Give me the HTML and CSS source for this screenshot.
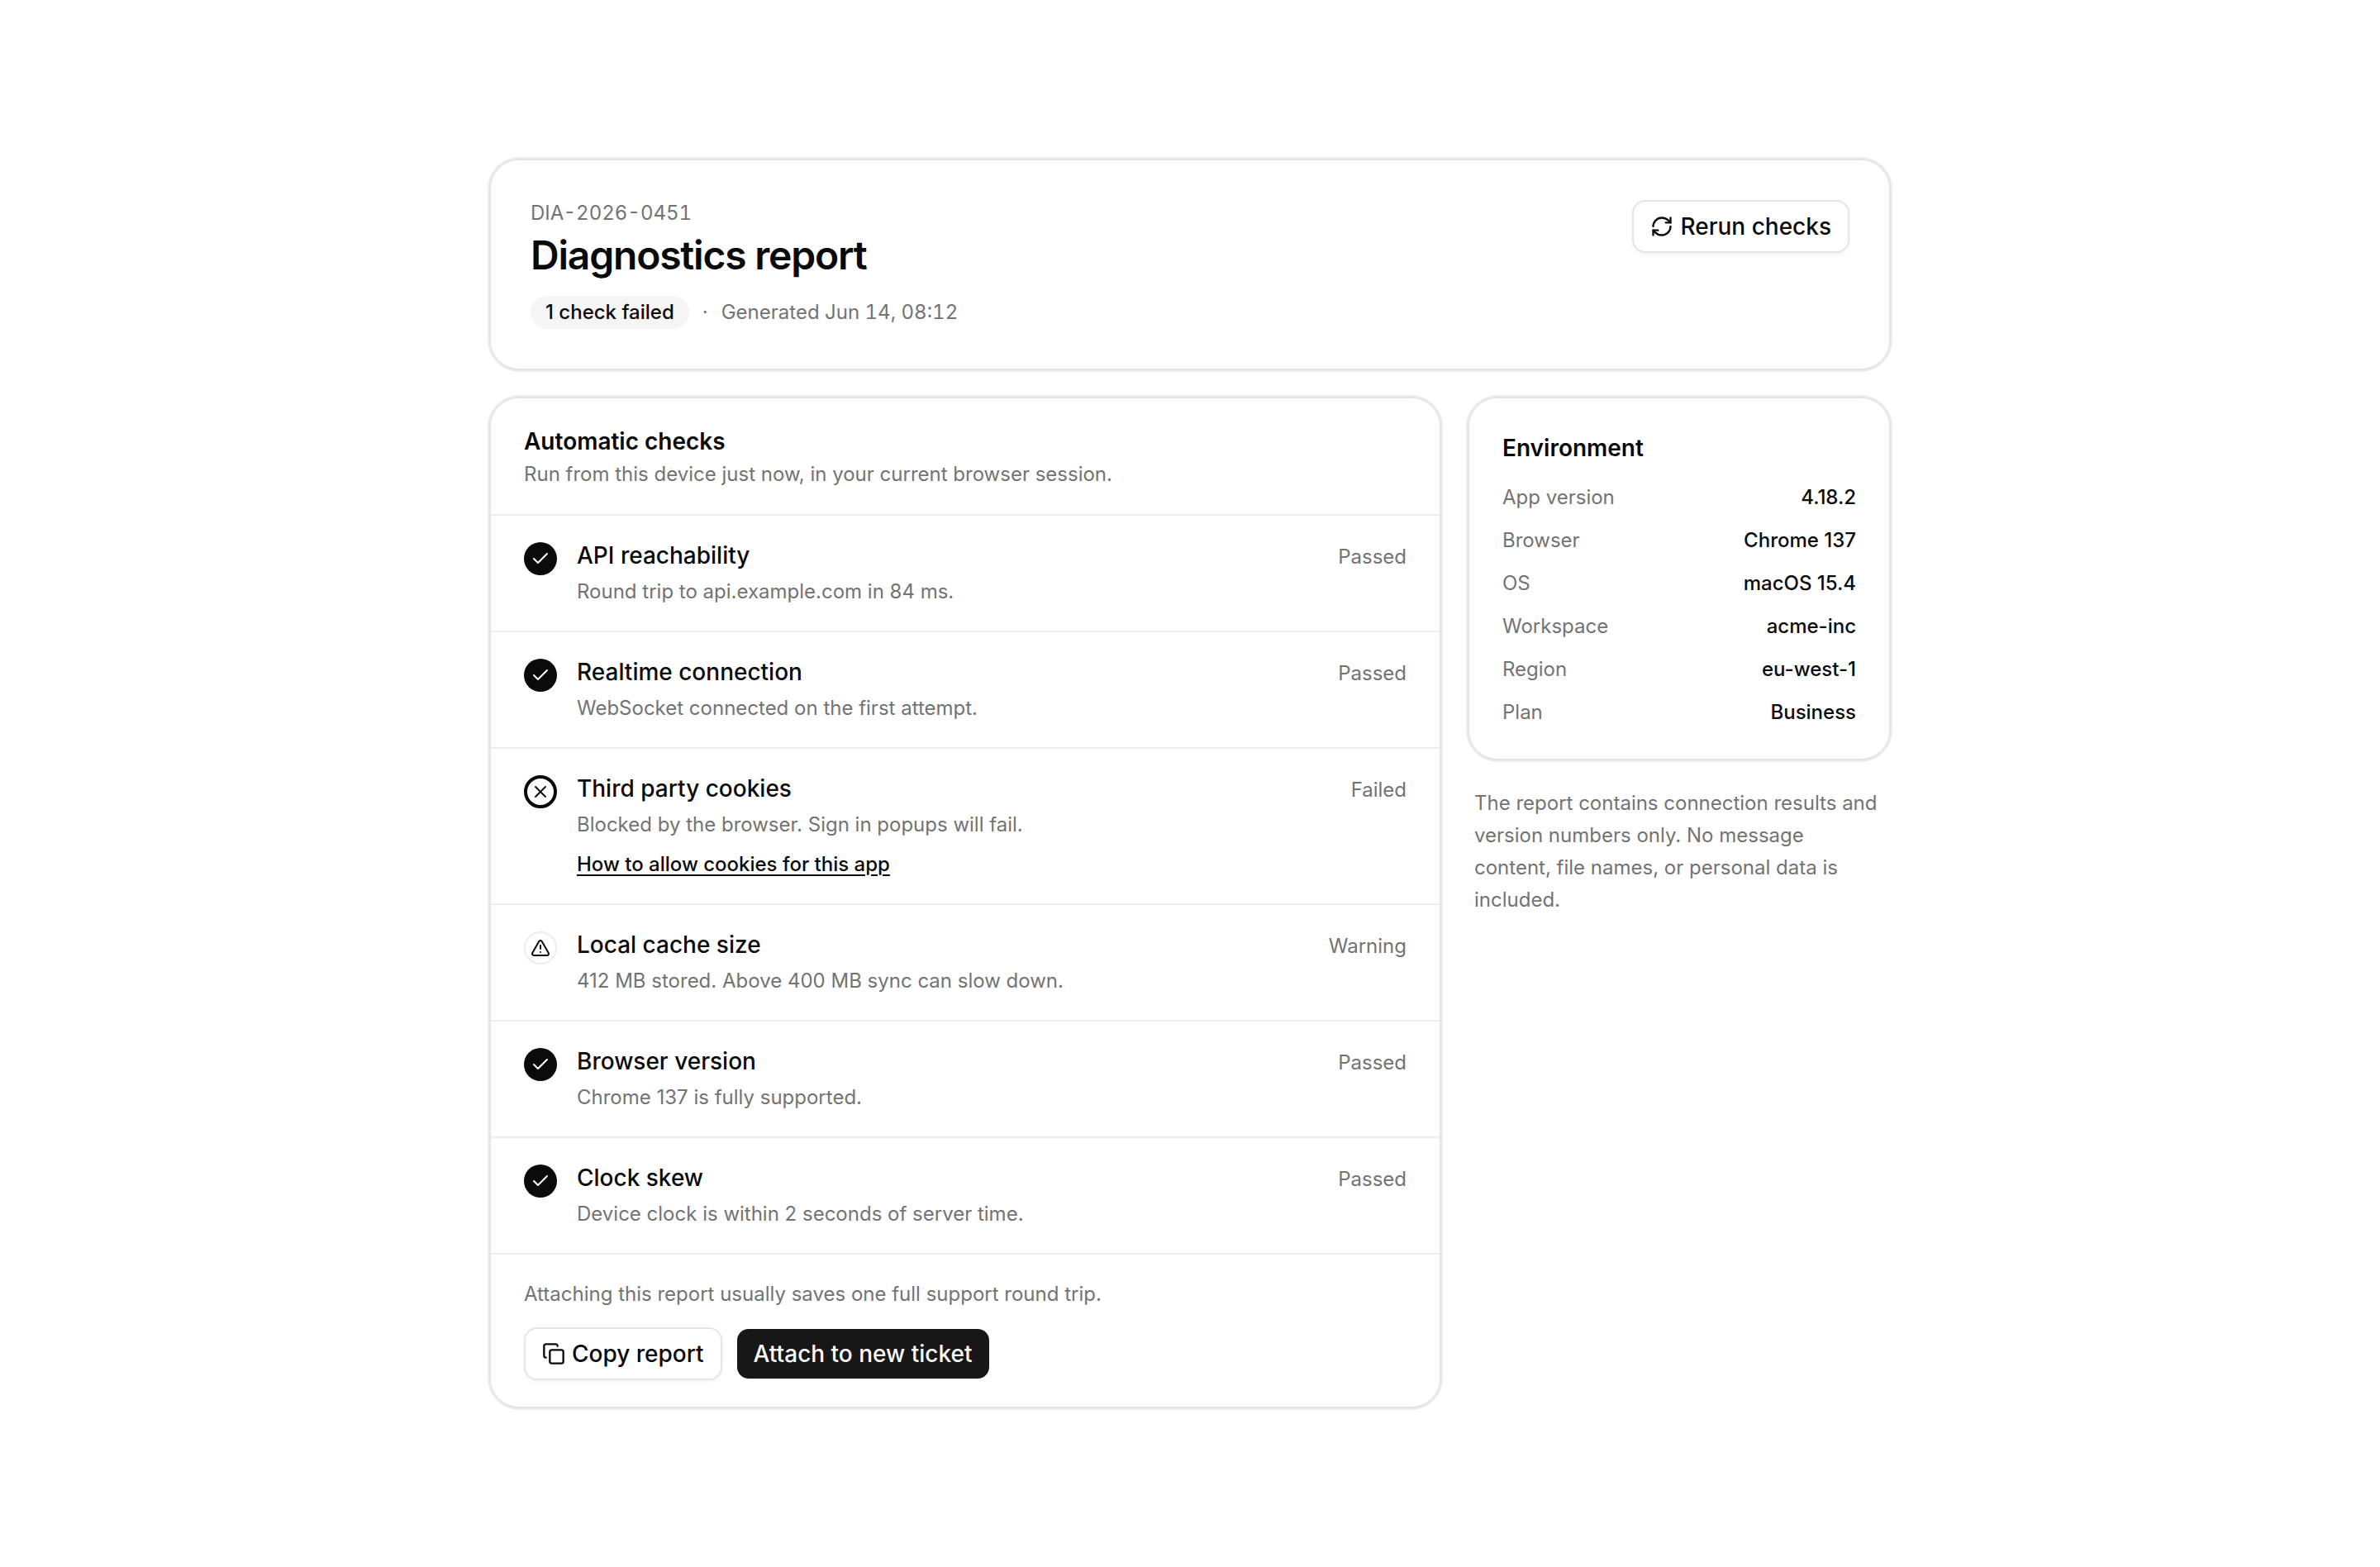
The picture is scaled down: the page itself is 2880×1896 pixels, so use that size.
FILE: index.html
```html
<!DOCTYPE html>
<html lang="en">
<head>
  <meta charset="UTF-8">
  <title>Diagnostics report</title>
  <meta name="viewport" content="width=device-width, initial-scale=1.0">
  <link rel="stylesheet" href="styles.css">
</head>
<body>
  <!-- shared icon shapes -->
  <svg class="sprite" aria-hidden="true">
    <symbol id="icon-refresh" viewBox="0 0 24 24">
      <path d="M3 12a9 9 0 0 1 9-9 9.75 9.75 0 0 1 6.74 2.74L21 8"/>
      <path d="M21 3v5h-5"/>
      <path d="M21 12a9 9 0 0 1-9 9 9.75 9.75 0 0 1-6.74-2.74L3 16"/>
      <path d="M8 16H3v5"/>
    </symbol>
    <symbol id="icon-check" viewBox="0 0 24 24">
      <path d="M20 6 9 17l-5-5"/>
    </symbol>
    <symbol id="icon-x" viewBox="0 0 24 24">
      <path d="M18 6 6 18"/>
      <path d="m6 6 12 12"/>
    </symbol>
    <symbol id="icon-warning" viewBox="0 0 24 24">
      <path d="m21.73 18-8-14a2 2 0 0 0-3.48 0l-8 14A2 2 0 0 0 4 21h16a2 2 0 0 0 1.73-3"/>
      <path d="M12 9v4"/>
      <path d="M12 17h.01"/>
    </symbol>
    <symbol id="icon-copy" viewBox="0 0 24 24">
      <rect width="14" height="14" x="8" y="8" rx="2" ry="2"/>
      <path d="M4 16c-1.1 0-2-.9-2-2V4c0-1.1.9-2 2-2h10c1.1 0 2 .9 2 2"/>
    </symbol>
  </svg>

  <main class="page">
    <header class="card report-header">
      <div>
        <p class="report-id">DIA-2026-0451</p>
        <h1>Diagnostics report</h1>
        <div class="report-meta">
          <span class="badge">1 check failed</span>
          <span>·</span>
          <span class="generated">Generated Jun 14, 08:12</span>
        </div>
      </div>
      <button type="button" class="btn">
        <svg class="icon"><use href="#icon-refresh"/></svg>
        Rerun checks
      </button>
    </header>

    <div class="columns">
      <section class="card">
        <div class="checks-header">
          <h2>Automatic checks</h2>
          <p>Run from this device just now, in your current browser session.</p>
        </div>
        <ul class="checks">
          <li class="check">
            <span class="mark mark-passed"><svg class="icon"><use href="#icon-check"/></svg></span>
            <div class="check-body">
              <h3>API reachability</h3>
              <p>Round trip to api.example.com in 84 ms.</p>
            </div>
            <span class="status">Passed</span>
          </li>
          <li class="check">
            <span class="mark mark-passed"><svg class="icon"><use href="#icon-check"/></svg></span>
            <div class="check-body">
              <h3>Realtime connection</h3>
              <p>WebSocket connected on the first attempt.</p>
            </div>
            <span class="status">Passed</span>
          </li>
          <li class="check">
            <span class="mark mark-failed"><svg class="icon"><use href="#icon-x"/></svg></span>
            <div class="check-body">
              <h3>Third party cookies</h3>
              <p>Blocked by the browser. Sign in popups will fail.</p>
              <a href="#">How to allow cookies for this app</a>
            </div>
            <span class="status">Failed</span>
          </li>
          <li class="check">
            <span class="mark mark-warning"><svg class="icon"><use href="#icon-warning"/></svg></span>
            <div class="check-body">
              <h3>Local cache size</h3>
              <p>412 MB stored. Above 400 MB sync can slow down.</p>
            </div>
            <span class="status">Warning</span>
          </li>
          <li class="check">
            <span class="mark mark-passed"><svg class="icon"><use href="#icon-check"/></svg></span>
            <div class="check-body">
              <h3>Browser version</h3>
              <p>Chrome 137 is fully supported.</p>
            </div>
            <span class="status">Passed</span>
          </li>
          <li class="check">
            <span class="mark mark-passed"><svg class="icon"><use href="#icon-check"/></svg></span>
            <div class="check-body">
              <h3>Clock skew</h3>
              <p>Device clock is within 2 seconds of server time.</p>
            </div>
            <span class="status">Passed</span>
          </li>
        </ul>
        <div class="checks-footer">
          <p>Attaching this report usually saves one full support round trip.</p>
          <div class="actions">
            <button type="button" class="btn">
              <svg class="icon"><use href="#icon-copy"/></svg>
              Copy report
            </button>
            <button type="button" class="btn btn-primary">Attach to new ticket</button>
          </div>
        </div>
      </section>

      <aside class="sidebar">
        <section class="card environment">
          <h2>Environment</h2>
          <dl>
            <div><dt>App version</dt><dd>4.18.2</dd></div>
            <div><dt>Browser</dt><dd>Chrome 137</dd></div>
            <div><dt>OS</dt><dd>macOS 15.4</dd></div>
            <div><dt>Workspace</dt><dd>acme-inc</dd></div>
            <div><dt>Region</dt><dd>eu-west-1</dd></div>
            <div><dt>Plan</dt><dd>Business</dd></div>
          </dl>
        </section>
        <p class="note">The report contains connection results and version numbers only. No message content, file names, or personal data is included.</p>
      </aside>
    </div>
  </main>
</body>
</html>
```

FILE: styles.css
```css
* {
  box-sizing: border-box;
  margin: 0;
  padding: 0;
}
body {
  background: #fff;
  color: #0a0a0a;
  font-family: Inter, sans-serif;
  font-size: 24px;
  line-height: 32px;
}
.sprite {
  display: none;
}
.page {
  display: flex;
  flex-direction: column;
  justify-content: center;
  gap: 32px;
  max-width: 1792px;
  min-height: 100vh;
  margin: 0 auto;
  padding: 48px;
}
.card {
  background: #fff;
  border: 2px solid #e5e5e5;
  border-radius: 36px;
  box-shadow: 0 0 0 2px #ededed;
}
.icon {
  width: 28px;
  height: 28px;
  flex-shrink: 0;
  fill: none;
  stroke: currentColor;
  stroke-width: 2;
  stroke-linecap: round;
  stroke-linejoin: round;
}

/* Header */
.report-header {
  display: flex;
  justify-content: space-between;
  align-items: flex-start;
  padding: 48px;
}
.report-id {
  color: #737373;
  font-variant-numeric: tabular-nums;
}
h1 {
  margin: 5px 0 19px;
  font-size: 48px;
  line-height: 60px;
  font-weight: 600;
  letter-spacing: -0.025em;
}
.report-meta {
  display: flex;
  align-items: center;
  gap: 16px;
  color: #737373;
}
.badge {
  padding: 4px 18px;
  border-radius: 20px;
  background: #f5f5f5;
  color: #0a0a0a;
  font-weight: 500;
}
.generated {
  font-variant-numeric: tabular-nums;
}

/* Buttons */
.btn {
  display: inline-flex;
  align-items: center;
  gap: 8px;
  height: 64px;
  padding: 0 20px;
  border: 2px solid #e5e5e5;
  border-radius: 16px;
  background: #fff;
  background-clip: padding-box;
  box-shadow: 0 2px 4px rgba(0, 0, 0, 0.05);
  color: #0a0a0a;
  font-family: inherit;
  font-size: 28px;
  font-weight: 500;
  white-space: nowrap;
  cursor: pointer;
}
.btn-primary {
  border-color: transparent;
  background-color: #171717;
  box-shadow: none;
  color: #fafafa;
}

/* Checks */
.columns {
  display: grid;
  grid-template-columns: minmax(0, 1fr) 512px;
  align-items: start;
  gap: 32px;
}
h2 {
  font-size: 28px;
  line-height: 40px;
  font-weight: 600;
}
.checks-header {
  padding: 32px 40px;
}
.checks-header p {
  margin-top: 4px;
  color: #737373;
}
.checks {
  list-style: none;
}
.check {
  display: flex;
  align-items: flex-start;
  gap: 24px;
  padding: 28px 40px;
  border-top: 2px solid #ededed;
}
.mark {
  display: flex;
  align-items: center;
  justify-content: center;
  width: 40px;
  height: 40px;
  margin-top: 4px;
  flex-shrink: 0;
  border-radius: 50%;
}
.mark .icon {
  width: 24px;
  height: 24px;
}
.mark-passed {
  background: #0a0a0a;
  color: #fff;
}
.mark-failed {
  border: 4px solid #0a0a0a;
}
.mark-warning {
  border: 2px solid #ededed;
}
.check-body {
  flex: 1;
}
.check-body h3 {
  font-size: 28px;
  line-height: 40px;
  font-weight: 500;
}
.check-body p {
  margin-top: 4px;
  line-height: 39px;
  color: #737373;
}
.check-body a {
  display: inline-block;
  margin-top: 9px;
  line-height: 39px;
  vertical-align: top;
  color: #0a0a0a;
  font-weight: 500;
  text-decoration-thickness: 2px;
  text-underline-offset: 4px;
}
.status {
  margin-top: 4px;
  line-height: 36px;
  color: #737373;
}
.checks-footer {
  padding: 32px 40px;
  border-top: 2px solid #ededed;
}
.checks-footer p {
  color: #737373;
}
.actions {
  display: flex;
  flex-wrap: wrap;
  gap: 16px;
  margin-top: 24px;
}

/* Sidebar */
.sidebar {
  display: grid;
  gap: 32px;
}
.environment {
  padding: 40px;
}
.environment dl {
  display: grid;
  gap: 20px;
  margin-top: 24px;
}
.environment dl div {
  display: flex;
  justify-content: space-between;
}
.environment dt {
  color: #737373;
}
.environment dd {
  font-weight: 500;
}
.note {
  padding: 0 8px;
  line-height: 39px;
  color: #737373;
}
@media (max-width: 1200px) {
  .columns {
    grid-template-columns: 1fr;
  }
}
```
